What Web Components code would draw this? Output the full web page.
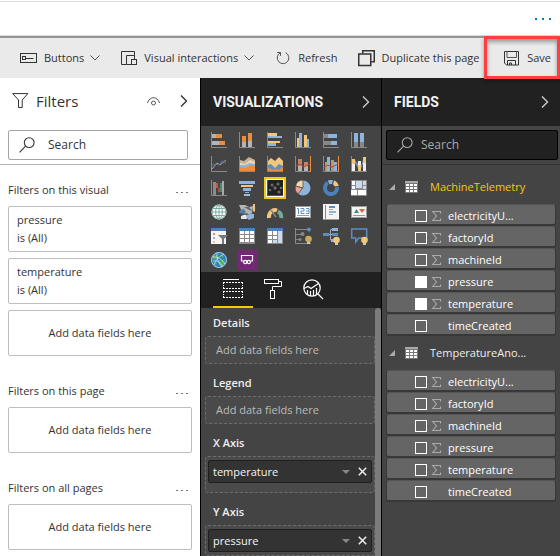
<!DOCTYPE html>
<html lang="en">
<head>
<meta charset="utf-8">
<title>Report editor</title>
<style>
  html, body { margin: 0; height: 100%; }
  body { font: 11px/16px "Open Sans", "Noto Sans", sans-serif; color: #333; background: #fff; overflow: hidden; }
</style>
</head>
<body>
<report-editor></report-editor>

<script>
const ICONS = {
  button: [18, 10, `<g fill="none" stroke="#333"><rect x=".5" y=".5" width="16" height="9"/><rect x="2.5" y="3.5" width="3" height="3"/><path d="M5.5 5.5h8" /></g>`],
  interactions: [17, 16, `<g fill="none" stroke="#333"><path d="M5.5 14.5h-5V1.5h13v4M5.5 14.5V5.5h8v4M5.5 14.5h5"/><rect x="10.500" y="9.500" width="5" height="5"/></g>`],
  refresh: [14, 14, `<path d="M4.200 1.800A5.800 5.800 0 1 0 9.500 1.600M4.500 4.800V1.500H1.200" fill="none" stroke="#555"/>`],
  duplicate: [17, 17, `<g fill="none" stroke="#333" stroke-width="1.500"><path d="M4.750 3.500V.75h11.500v11h-3"/><rect x=".75" y="4" width="12" height="11.500"/></g>`],
  save: [16, 15, `<g fill="none" stroke="#333"><path d="M.5.500h14v13.500H2.500l-2-2z"/><path d="M3 .5v6h9.500v-6" stroke="#555"/><path d="M3.500 14V9.500h8V14M5.500 14v-2h2v2"/></g>`],
  chevdown: [10, 6, `<path d="M.5.500l4.500 4.500L9.500.500" fill="none" stroke="#555"/>`],
  chevright: [8, 14, `<path d="M1 1.500l5.500 5.500L1 12.500" fill="none" stroke="currentColor" stroke-width="1.400"/>`],
  funnel: [17, 16, `<path d="M.7.600h15.200L10.200 7v7.500H6.500V7z" fill="none" stroke="#333"/>`],
  eye: [13, 9, `<g fill="none" stroke="#555"><path d="M.5 6C1.500 2.500 4 .700 6.500.700S11.500 2.500 12.500 6"/><circle cx="6.500" cy="6" r="2"/></g>`],
  lens: [16, 16, `<g fill="none" stroke="currentColor" stroke-width="1.100"><circle cx="10.200" cy="5.600" r="4.900"/><path d="M6.600 9.200L.500 15.400"/></g>`],
  table: [13, 12, `<path fill="#aaa" d="M0 0h13v2H0z"/><path fill="#777" d="M0 2h13v10H0z"/><path d="M1 3h3v2H1zM5 3h3v2H5zM9 3h3v2H9zM1 6h3v2H1zM5 6h3v2H5zM9 6h3v2H9zM1 9h3v2H1zM5 9h3v2H5zM9 9h3v2H9z" fill="#fff"/>`],
  sigma: [9, 10, `<path d="M8.500 2.500V.500H.700L4.500 5 .700 9.500h7.800v-2" fill="none" stroke="#aaa" stroke-width="1.100"/>`],
  cross: [9, 9, `<path d="M.8.800l7.400 7.400M8.200.800L.800 8.200" stroke="#eee" stroke-width="1.500"/>`],
  drop: [8, 4, `<path d="M0 0h8L4 4z" fill="#888"/>`],
  open: [6, 6, `<path d="M6 0v6H0z" fill="#aaa"/>`],
  wells: [20, 20, `<g fill="none" stroke="#fff"><path d="M0 .5h16M0 3.500h20M0 9.500h20M0 12.500h20M0 18.500h20" stroke-dasharray="none"/><path d="M0 3.500h20M0 9.500h20M0 12.500h20M0 18.500h20" stroke="#212121" stroke-dasharray="1 2" stroke-dashoffset="-2"/><path d="M.5 4v5M19.500 4v5M.5 13v5M19.500 13v5" stroke-dasharray="1 1"/></g>`],
  roller: [18, 20, `<g fill="none" stroke="#fff"><rect x=".5" y=".5" width="14" height="4"/><path d="M14.500 2.500h3v5h-9v4"/><rect x="6.500" y="11.500" width="4" height="8"/></g>`],
  analytics: [21, 21, `<g fill="none" stroke="#fff" stroke-width="1.200"><circle cx="9" cy="9" r="8.200"/><path d="M15 15l5 5M1 9.500l4-2 3 2 7.500-5" /><path d="M4.500 11v4M7.500 12v5M10.500 11v6M13.500 9v6.500"/></g>`],
  dots: [13, 3, `<path d="M0 1h2v1H0zM5 1h2v1H5zM10 1h2v1h-2z" fill="currentColor"/>`]
};

const AXIS = `<path d="M.5 0v15.500H16" fill="none" stroke="#8a8a8a"/>`;
const BLUE = '#8fb4dc', GOLD = '#f0c77c', ORANGE = '#e98e41', GREY = '#b4b4b4';
const r = (x, y, w, h, f) => `<rect x="${x}" y="${y}" width="${w}" height="${h}" fill="${f}"/>`;
const bulb = (x, y, f = GOLD) => `<circle cx="${x}" cy="${y}" r="3.300" fill="${f}"/>${r(x - 1.5, y + 3, 3, 2, '#c9c9c9')}`;

const VISUALS = [
  ['Stacked bar chart', AXIS + r(1,2,4,4,GREY) + r(5,2,6,4,ORANGE) + r(1,9,7,4,GREY) + r(8,9,6,4,ORANGE)],
  ['Stacked column chart', AXIS + r(3,4,4,6,ORANGE) + r(3,10,4,5,GREY) + r(9,1,4,8,ORANGE) + r(9,9,4,6,GREY)],
  ['Clustered bar chart', AXIS + r(1,1,9,3,GOLD) + r(1,4,14,2,BLUE) + r(1,9,12,2,GOLD) + r(1,11,8,3,BLUE)],
  ['Clustered column chart', AXIS + r(2,6,2,9,GOLD) + r(4,1,3,14,BLUE) + r(9,3,3,12,GOLD) + r(12,7,2,8,BLUE)],
  ['100% stacked bar chart', AXIS + r(1,2,4,4,'#888') + r(5,2,9,4,BLUE) + r(1,9,7,4,'#888') + r(8,9,6,4,BLUE)],
  ['100% stacked column chart', AXIS + r(3,1,4,9,BLUE) + r(3,10,4,5,'#888') + r(9,1,4,9,BLUE) + r(9,10,4,5,'#888')],
  ['Line chart', AXIS + `<path d="M1 13l5-6 3 2 6-5" fill="none" stroke="#d79a83"/><path d="M1 9l4-1 3 1 3-4 4 2" fill="none" stroke="#3f78ae"/>`],
  ['Area chart', `<path d="M1 4l4 1 5-4 6 3v8H1z" fill="#c9b291"/><path d="M1 7l5 1 5-4 5 2v5H1z" fill="#e9d9bf"/><path d="M1 9l5 0 5-2 5 1v5H1z" fill="${BLUE}"/><path d="M1 11l6 1 4-3 5 1v6H1z" fill="${ORANGE}"/>` + AXIS],
  ['Stacked area chart', `<path d="M1 5l3-3 4 3 4-4 4 4v11H1z" fill="${GOLD}"/><path d="M1 9l3-1 4 4 4-4 4 2v6H1z" fill="#5c8fbe"/><path d="M1 11l4 3 3-1 4 1 4-3v5H1z" fill="${ORANGE}"/>` + AXIS],
  ['Line and stacked column chart', AXIS + r(3,3,4,7,'#c18367') + r(3,10,4,5,GREY) + r(9,6,4,4,'#c18367') + r(9,10,4,5,GREY) + r(15,0,1,16,ORANGE) + `<path d="M1 10l4-2 4 3 6-3" fill="none" stroke="#b84436"/>`],
  ['Line and clustered column chart', AXIS + r(2,6,2,9,'#b39a70') + r(4,1,3,14,BLUE) + r(8,4,3,11,'#b39a70') + r(11,6,3,9,BLUE) + r(15,0,1,16,ORANGE) + `<path d="M1 11l4-2 4 2 6-3" fill="none" stroke="#b84436"/>`],
  ['Ribbon chart', AXIS + r(1,3,3,5,GOLD) + r(1,8,3,7,'#eee') + r(7,5,3,4,'#eee') + r(7,9,3,6,GOLD) + r(12,1,3,6,GOLD) + r(12,7,3,8,'#eee') + `<path d="M4 4l3 4v4l-3-5zM10 10l2-6v4l-2 5z" fill="#7094b5"/>`],
  ['Waterfall chart', AXIS + r(2,2,3,13,'#8b8b8b') + r(5,3,2,5,'#c9543f') + r(7,8,2,4,'#b8483b') + r(9,3,2,9,'#458b76') + r(11,1,2,14,'#aaa')],
  ['Funnel', r(0,1,16,3,BLUE) + r(2,5,12,2,GOLD) + r(4,8,8,3,BLUE) + r(6,12,4,1,BLUE) + r(5,14,6,2,'#9ac0de')],
  ['Scatter chart', `<path d="M.5 0v15.500H16" fill="none" stroke="#555"/><g fill="#6b6b6b"><circle cx="5" cy="5" r="1.500"/><circle cx="11" cy="4" r="1.500"/><circle cx="8" cy="8" r="1.700"/><circle cx="3" cy="10" r="1.300"/><circle cx="14" cy="8" r="1.300"/><circle cx="12" cy="12" r="1.600"/></g>`],
  ['Pie chart', `<circle cx="8" cy="8" r="7.500" fill="${BLUE}"/><path d="M8 8V0A8 8 0 0 0 .500 6z" fill="#f0d9b0" stroke="#444" stroke-width=".7"/><path d="M7.500 8L.300 6A8 8 0 0 0 3 14z" fill="#e9a390" stroke="#444" stroke-width=".7"/>`],
  ['Donut chart', `<g fill="none" stroke-width="4"><circle cx="8" cy="8" r="6" stroke="#4a82bd"/><path d="M10 2.200a6 6 0 0 1 3.800 4.500" stroke="${GOLD}"/><path d="M5.500 2.500A6 6 0 0 1 9.500 2.100" stroke="${BLUE}"/></g><path d="M4 0l2 5M10.500 0L9.500 5M11 7l5-.5" stroke="#444"/>`],
  ['Treemap', r(0,0,16,16,'#8a8a8a') + r(1,1,3,4,'#fff') + r(5,1,6,7,'#cadced') + r(1,6,3,3,'#fff') + r(12,1,3,4,'#cadced') + r(12,6,3,3,'#cadced') + r(0,10,6,5,'#fff') + r(7,10,8,5,'#fff')],
  ['Map', `<circle cx="8" cy="8" r="7.500" fill="#fff"/><g fill="none" stroke="#79aaa0"><circle cx="8" cy="8" r="7"/><ellipse cx="8" cy="8" rx="3.300" ry="7"/><path d="M1 8h14M8 1v14M2 4.500h12M2 11.500h12"/></g>`],
  ['Filled map', `<path d="M0 1h6l4 2 4-1-1 7-5 2-5-3z" fill="#b4b4b4"/><path d="M1 6l4-1 2 3-3 2-4-1z" fill="#527da3"/><path d="M8 9l7 1v4l-5 2-3-3z" fill="${BLUE}"/><path d="M14 0h2v8l-2-1z" fill="${GOLD}"/><path d="M2 12l5-2 1 5-6 0z" fill="#e5e5e5"/><path d="M5 3h5l3 4-3-1zM3 10l5-1 2 2H6z" fill="#666"/>`],
  ['Gauge', `<g fill="none" stroke-width="4"><path d="M2 14a6 7 0 0 1 8-7.500" stroke="${GOLD}"/><path d="M11 7.500a6 6 0 0 1 3 6.500" stroke="#76aa99"/></g><path d="M4 6l5 7" stroke="#888" stroke-width="1.500"/>`],
  ['Card', r(0,2,16,12,'#fff') + `<path d="M.5 2.500h15v11H.5z" fill="none" stroke="#999"/><g fill="none" stroke="#5c8fbe"><path d="M2 4.500h1.500V10M5.500 4.500H9v2.500H6v2.500h3.500M11 4.500h3v5h-3M11 7h3"/></g>` + r(2,11,12,1,'#999')],
  ['Multi-row card', r(0,0,16,16,'#f4f4f4') + r(2,1,1,14,'#888') + r(6,2,6,2,'#5c8fbe') + r(6,5,4,1,'#aaa') + r(6,7,7,2,BLUE) + r(6,10,4,1,'#aaa') + r(0,15,16,1,'#999')],
  ['KPI', r(0,2,16,12,'#f4f4f4') + `<path d="M.5 2.500h15v11H.5z" fill="none" stroke="#999"/><path d="M3 9l2.500-4L8 9z" fill="#438b6d"/><path d="M8 5h6l-3 4z" fill="#df604b"/>` + r(2,11,12,1,'#999')],
  ['Slicer', r(0,0,15,16,'#f6f6f6') + r(0,0,15,3,'#4a82bd') + r(2,5,2,2,ORANGE) + r(2,9,2,2,BLUE) + r(2,13,2,2,GOLD) + `<path d="M7 7h10l-4 4v5h-2v-5z" fill="#777"/>`],
  ['Table', r(0,0,16,16,'#8a8a8a') + r(0,0,16,3,'#4a82bd') + [0,1,2].flatMap(i => [0,1,2].map(j => r(1+i*5,3+j*4,4,3,'#fff'))).join('')],
  ['Matrix', r(0,0,16,16,'#8a8a8a') + r(0,0,16,3,'#4a82bd') + r(1,3,4,4,'#fff') + r(6,3,4,4,'#fff') + r(11,3,4,12,'#c9dcee') + r(1,8,4,3,'#fff') + r(6,8,4,3,'#fff') + r(1,12,4,3,'#fff') + r(6,12,4,3,'#c9dcee')],
  ['R script visual', AXIS + `<path d="M1 1.500h12M1 6.500h7M1 11.500h5" stroke="#888"/><circle cx="14" cy="1.500" r="2" fill="#5c8fbe"/><circle cx="7.500" cy="6" r="2" fill="#888"/><circle cx="5" cy="11.500" r="1.500" fill="#888"/>` + bulb(13.5,11,'#c9a861')],
  ['Decomposition tree', r(0,5,6,3,'#5c8fbe') + r(9,0,6,3,BLUE) + r(9,5,6,3,'#5c8fbe') + r(8,11,5,3,BLUE) + `<path d="M6 6.500h3M7.500 2v10M7.500 1.500H9M7.500 12H9" fill="none" stroke="#aaa"/>` + bulb(13.5,12)],
  ['Q&A', `<path d="M.700 1h15v9h-8l-3 4v-4h-4z" fill="none" stroke="#5c8fbe" stroke-width="1.500"/>` + bulb(13.5,12)],
  ['ArcGIS map', `<circle cx="8" cy="8" r="8" fill="#2f7fc5"/><path d="M2 4l4-2 2 3-3 3-3-1zM8 8l5-1 1 4-4 4-2-3zM3 10l3 1-1 3zM9 2l4 2-2 2z" fill="#4cac65"/><g fill="none" stroke="#c5dce6" stroke-width=".8"><circle cx="8" cy="8" r="7.500"/><path d="M1 5q8-1 13 7M3 13Q5 6 13 2M2 9q6-1 10 5M6 1q-1 7 5 14"/></g>`],
  ['Custom visual', `<path d="M-2-2h20v20H-2z" fill="#742774"/><g fill="none" stroke="#fff" stroke-width="1.200"><path d="M4.500 9H2.500V3.500h11V9h-2"/><circle cx="6.200" cy="10" r="1.600"/><circle cx="9.800" cy="10" r="1.600"/></g>`]
];

class Base extends HTMLElement {
  connectedCallback() {
    if (this.shadowRoot) return;
    this.attachShadow({ mode: 'open' }).innerHTML = this.view();
  }
  attr(name) { return this.getAttribute(name) || ''; }
}

customElements.define('ui-icon', class extends Base {
  view() {
    const [w, h, art] = ICONS[this.attr('name')];
    return `<style>:host{display:inline-flex;flex:none}svg{display:block;overflow:visible}</style>
      <svg width="${w}" height="${h}" viewBox="0 0 ${w} ${h}" aria-hidden="true">${art}</svg>`;
  }
});

customElements.define('tool-button', class extends Base {
  view() {
    return `<style>
      :host{display:block;flex:none}
      button{display:flex;align-items:center;gap:6px;height:40px;padding:0;border:0;background:none;font:11px/16px "Open Sans","Noto Sans",sans-serif;color:#333;white-space:nowrap}
      .lead{display:flex;min-width:18px;justify-content:center}
    </style>
    <button type="button"><span class="lead"><ui-icon name="${this.attr('icon')}"></ui-icon></span><slot></slot>
      ${this.hasAttribute('menu') ? '<ui-icon name="chevdown"></ui-icon>' : ''}</button>`;
  }
});

customElements.define('tool-bar', class extends Base {
  view() {
    return `<style>
      :host{display:flex;position:relative;align-items:center;gap:20px;padding:0 9px 0 20px;background:#eaeaea;height:40px;border-top:2px solid #959595;z-index:1}
      .save{margin-left:auto}
      .mark{position:absolute;right:0;top:-2px;bottom:-1px;width:76px;box-sizing:border-box;border:3px solid #fb3f42;box-shadow:inset 0 3px 4px rgba(0,0,0,.35),0 2px 4px rgba(0,0,0,.35);pointer-events:none}
    </style>
    <tool-button icon="button" menu>Buttons</tool-button>
    <tool-button icon="interactions" menu>Visual interactions</tool-button>
    <tool-button icon="refresh">Refresh</tool-button>
    <tool-button icon="duplicate">Duplicate this page</tool-button>
    <tool-button class="save" icon="save">Save</tool-button>
    <div class="mark"></div>`;
  }
});

customElements.define('top-strip', class extends Base {
  view() {
    return `<style>
      :host{display:flex;align-items:center;justify-content:flex-end;box-sizing:border-box;height:36px;padding:2px 5px 0;border-bottom:1px solid #ddd;background:linear-gradient(#ddd,#ddd) 0 1px/100% 1px no-repeat #fff}
      button{border:0;padding:4px 0;background:none;color:#0078d4;display:flex}
      i{width:2px;height:2px;background:#0078d4;margin:0 4px 0 1px}
    </style><button type="button" aria-label="More options"><i></i><i></i><i></i></button>`;
  }
});

customElements.define('search-box', class extends Base {
  view() {
    return `<style>
      :host{display:block}
      label{display:flex;align-items:center;box-sizing:border-box;height:30px;gap:var(--gap,13px);padding:0 10px;border:1px solid var(--edge,#a6a6a6);border-radius:2px;background:var(--fill,#fff);color:var(--ink,#333)}
      input{flex:1;min-width:0;border:0;padding:0;outline:0;background:none;font:12px/18px "Open Sans","Noto Sans",sans-serif;color:inherit}
      input::placeholder{color:inherit;opacity:1}
    </style><label><ui-icon name="lens"></ui-icon><input type="text" placeholder="Search" aria-label="Search"></label>`;
  }
});

customElements.define('filter-card', class extends Base {
  view() {
    return `<style>
      :host{display:flex;flex-direction:column;justify-content:center;box-sizing:border-box;height:46px;padding:0 8px;border:1px solid #bdbdbd;border-radius:2px;line-height:18px}
      :host([drop]){align-items:center}
    </style><slot></slot>`;
  }
});

customElements.define('filter-group', class extends Base {
  view() {
    return `<style>
      :host{display:flex;flex-direction:column;gap:6px}
      header{display:flex;align-items:center;justify-content:space-between;height:26px;padding:6px 3px 0 0;box-sizing:border-box}
      h3{margin:0;font:11px/16px "Open Sans","Noto Sans",sans-serif}
      button{border:0;background:none;padding:4px 0 0;display:flex;color:#777}
    </style>
    <header><h3>${this.attr('heading')}</h3><button type="button" aria-label="More options"><ui-icon name="dots"></ui-icon></button></header>
    <slot></slot>`;
  }
});

customElements.define('filters-pane', class extends Base {
  view() {
    return `<style>
      :host{display:block;background:#fff;overflow:hidden}
      header{display:flex;align-items:center;height:46px;padding:0 12px;gap:7px}
      h2{flex:1;margin:0;font:15px/20px "Open Sans","Noto Sans",sans-serif}
      button{border:0;background:none;padding:0;display:flex;color:#333}
      .tools{display:flex;gap:20px;align-items:center}
      search-box{margin:6px 12px 4px 8px}
      .list{border-top:1px solid #b5b2af;padding:9px 8px 0;display:flex;flex-direction:column;gap:19px}
    </style>
    <header><ui-icon name="funnel"></ui-icon><h2>Filters</h2><div class="tools"><button type="button" aria-label="Show or hide"><ui-icon name="eye"></ui-icon></button><button type="button" aria-label="Collapse"><ui-icon name="chevright"></ui-icon></button></div></header>
    <search-box></search-box>
    <div class="list">
      <filter-group heading="Filters on this visual">
        <filter-card><span>pressure</span><span>is (All)</span></filter-card>
        <filter-card><span>temperature</span><span>is (All)</span></filter-card>
        <filter-card drop>Add data fields here</filter-card>
      </filter-group>
      <filter-group heading="Filters on this page"><filter-card drop>Add data fields here</filter-card></filter-group>
      <filter-group heading="Filters on all pages"><filter-card drop>Add data fields here</filter-card></filter-group>
    </div>`;
  }
});

customElements.define('pane-title', class extends Base {
  view() {
    return `<style>
      :host{display:flex;align-items:center;justify-content:space-between;height:48px;padding:0 11px 0 12px;background:#212121;color:#f3f3f3}
      h2{margin:0;font:bold 14px/20px Roboto,"Open Sans",sans-serif}
      button{border:0;background:none;padding:0;display:flex;color:#ccc}
    </style><h2><slot></slot></h2><button type="button" aria-label="Collapse"><ui-icon name="chevright"></ui-icon></button>`;
  }
});

customElements.define('visual-picker', class extends Base {
  view() {
    return `<style>
      :host{display:grid;grid-template-columns:repeat(6,22px);grid-auto-rows:22px;gap:2px 6px;padding:3px 7px 1px;background:#444}
      button{display:flex;align-items:center;justify-content:center;box-sizing:border-box;padding:0;border:0;background:none}
      button.on{border:2px solid #f2c811;background:#212121;outline:1px solid #fff;outline-offset:-3px}
      svg{flex:none;overflow:visible}
    </style>` + VISUALS.map(([n, art]) => `<button type="button" title="${n.replace('&', '&amp;')}"${n === 'Scatter chart' ? ' class="on"' : ''}><svg width="16" height="16" viewBox="0 0 16 16">${art}</svg></button>`).join('');
  }
});

customElements.define('field-well', class extends Base {
  view() {
    const v = this.attr('value');
    return `<style>
      :host{display:block;color:#eee}
      h3{margin:0;padding:6px 8px 5px;font:600 11px/17px "Open Sans","Noto Sans",sans-serif;height:17px}
      .zone{box-sizing:border-box;min-height:28px;padding:${v ? '3px 2px' : '4px 10px'};border:1px dashed #6c6c6c;border-radius:3px;background:#4a4a4a;color:#bbb;line-height:18px}
      .chip{display:flex;align-items:center;gap:8px;box-sizing:border-box;height:23px;padding:0 4px;border:1px solid #1f1f1f;border-radius:2px;background:#333;color:#f3f3f3;font-weight:500}
      .chip span{flex:1}
      button{border:0;background:none;padding:0;display:flex}
      :host([roomy]) .zone{padding-bottom:9px}
    </style><h3>${this.attr('heading')}</h3>
    <div class="zone">${v ? `<div class="chip"><span>${v}</span><button type="button" aria-label="Options"><ui-icon name="drop"></ui-icon></button><button type="button" aria-label="Remove"><ui-icon name="cross"></ui-icon></button></div>` : 'Add data fields here'}</div>`;
  }
});

customElements.define('visuals-pane', class extends Base {
  view() {
    return `<style>
      :host{display:flex;flex-direction:column;background:#444;border-left:1px solid #000;overflow:hidden}
      nav{display:flex;height:36px;padding:0 12px;background:#212121}
      nav button{display:flex;align-items:center;justify-content:center;box-sizing:border-box;width:40px;padding:0;border:0;border-bottom:2px solid transparent;background:none}
      nav button.on{border-color:#f2c811}
      .body{flex:1;display:flex;min-height:0}
      .wells{flex:1;padding:0 0 0 4px}
      .bar{width:6px;background:#7b7b7b;border-radius:3px 3px 0 0}
      field-well{margin-bottom:4px}
    </style>
    <pane-title>VISUALIZATIONS</pane-title>
    <visual-picker></visual-picker>
    <nav><button type="button" class="on" aria-label="Fields"><ui-icon name="wells"></ui-icon></button><button type="button" aria-label="Format"><ui-icon name="roller"></ui-icon></button><button type="button" aria-label="Analytics"><ui-icon name="analytics"></ui-icon></button></nav>
    <div class="body"><div class="wells">
      <field-well heading="Details"></field-well>
      <field-well heading="Legend"></field-well>
      <field-well heading="X Axis" value="temperature" roomy></field-well>
      <field-well heading="Y Axis" value="pressure"></field-well>
    </div><div class="bar"></div></div>`;
  }
});

customElements.define('field-row', class extends Base {
  view() {
    return `<style>
      :host{display:block}
      label{display:flex;align-items:center;box-sizing:border-box;height:22px;padding:2px 8px 0 28px;border:1px solid #383838;border-top-color:#555;border-bottom-width:2px;border-radius:3px;background:#656565;color:#fff;font-weight:500}
      input{appearance:none;box-sizing:border-box;width:12px;height:12px;margin:0 5px 0 0;border:1px solid #fff}
      input:checked{background:#fff}
      .type{width:16px;display:flex}
    </style><label><input type="checkbox"${this.hasAttribute('checked') ? ' checked' : ''}><span class="type">${this.hasAttribute('plain') ? '' : '<ui-icon name="sigma"></ui-icon>'}</span><slot></slot></label>`;
  }
});

customElements.define('field-table', class extends Base {
  view() {
    return `<style>
      :host{display:block}
      button{display:flex;align-items:center;width:100%;height:34px;padding:0 3px;border:0;background:none;font:500 11px/16px "Open Sans","Noto Sans",sans-serif;color:#eee}
      :host([active]) button{color:#f2c811}
      .t{margin:0 12px 0 10px}
    </style><button type="button" aria-expanded="true"><ui-icon name="open"></ui-icon><ui-icon class="t" name="table"></ui-icon>${this.attr('heading')}</button><slot></slot>`;
  }
});

customElements.define('fields-pane', class extends Base {
  view() {
    const rows = (...on) => ['electricityU...', 'factoryId', 'machineId', 'pressure', 'temperature', 'timeCreated']
      .map(n => `<field-row${on.includes(n) ? ' checked' : ''}${n === 'timeCreated' ? ' plain' : ''}>${n}</field-row>`).join('');
    return `<style>
      :host{display:block;background:#444;border-left:1px solid #000;overflow:hidden}
      search-box{margin:4px 2px 4px 4px;--edge:#000;--fill:#212121;--ink:#aaa;--gap:8px}
      .tree{border-top:1px solid #333;padding:5px 4px 0}
    </style>
    <pane-title>FIELDS</pane-title>
    <search-box></search-box>
    <div class="tree">
      <field-table heading="MachineTelemetry" active>${rows('pressure', 'temperature')}</field-table>
      <field-table heading="TemperatureAno...">${rows()}</field-table>
    </div>`;
  }
});

customElements.define('report-editor', class extends Base {
  view() {
    return `<style>
      :host{display:flex;flex-direction:column;height:100vh}
      main{flex:1;min-height:0;display:grid;grid-template-columns:minmax(0,200fr) minmax(0,181fr) minmax(0,179fr)}
    </style>
    <top-strip></top-strip><tool-bar></tool-bar>
    <main><filters-pane></filters-pane><visuals-pane></visuals-pane><fields-pane></fields-pane></main>`;
  }
});
</script>
</body>
</html>
